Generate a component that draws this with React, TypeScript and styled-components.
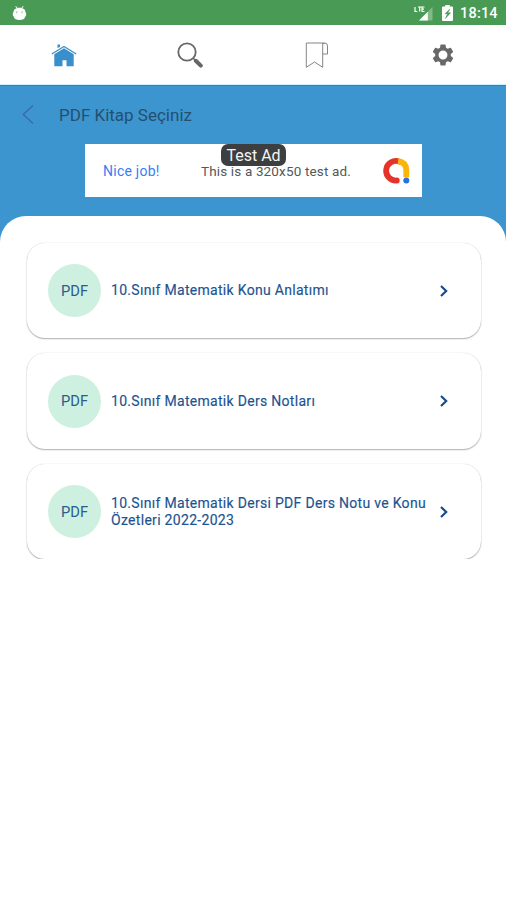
import React from "react";
import styled, { createGlobalStyle } from "styled-components";

const GlobalStyle = createGlobalStyle`
  * { box-sizing: border-box; }
  body { margin: 0; background: #fff; font-family: Roboto, "Liberation Sans", sans-serif; }
`;

const Screen = styled.div`
  width: 506px;
  height: 900px;
  display: flex;
  flex-direction: column;
  overflow: hidden;
  background: #3d95d0;
`;

const StatusBar = styled.header`
  height: 25px;
  flex: none;
  display: flex;
  align-items: center;
  justify-content: space-between;
  padding: 0 8px 0 12px;
  background: #489a54;
  color: #fff;
`;

const StatusGroup = styled.div`
  display: flex;
  align-items: center;
`;

const SignalIcon = styled.svg`
  margin-right: 9px;
`;

const BatteryIcon = styled.svg`
  margin-right: 7px;
`;

const Clock = styled.span`
  width: 38px;
  padding-top: 2px;
  font-size: 14.5px;
  font-weight: 500;
  line-height: 17px;
  letter-spacing: 0.2px;
  white-space: nowrap;
`;

const NavBar = styled.nav`
  height: 60px;
  flex: none;
  display: grid;
  grid-template-columns: repeat(4, 1fr);
  background: #fff;
  border-bottom: 1px solid #c9f1fb;
`;

const NavItem = styled.a`
  display: flex;
  align-items: center;
  justify-content: center;
  padding-left: 1px;
`;

const TitleRow = styled.div`
  height: 58px;
  flex: none;
  display: flex;
  align-items: center;
  padding-left: 22px;
  border-top: 1px solid #2588c6;
`;

const Title = styled.h1`
  margin: 0 0 0 25px;
  font-size: 17px;
  font-weight: 400;
  line-height: 20px;
  color: #24506f;
`;

const AdBanner = styled.aside`
  position: relative;
  width: 337px;
  height: 53px;
  flex: none;
  display: flex;
  align-items: center;
  margin: 1px 0 0 85px;
  padding: 0 11px 0 18px;
  background: #fff;
`;

const AdHeadline = styled.span`
  width: 98px;
  font-size: 14px;
  letter-spacing: 0.25px;
  color: #3c7cf4;
`;

const AdBody = styled.span`
  flex: 1;
  font-size: 13.5px;
  letter-spacing: 0.15px;
  color: #55585b;
  white-space: nowrap;
`;

const AdLabel = styled.span`
  position: absolute;
  top: 0;
  left: 136px;
  width: 65px;
  height: 22px;
  border-radius: 7px;
  background: #3d3e40;
  color: #f4f4f4;
  font-size: 16px;
  line-height: 23px;
  text-align: center;
  white-space: nowrap;
`;

const Sheet = styled.main`
  flex: 1;
  margin-top: 19px;
  padding: 25px 22px 0 25px;
  border-radius: 26px 26px 0 0;
  background: #fff;
`;

const CardList = styled.div`
  height: 318px;
  display: flex;
  flex-direction: column;
  gap: 15px;
  overflow: hidden;
  padding: 1.5px 0 0 1.5px;
`;

const Card = styled.article`
  width: 454px;
  height: 95.5px;
  flex: none;
  display: flex;
  align-items: center;
  padding: 0.5px 30.5px 0 21.5px;
  border-radius: 18px;
  background: #fff;
  box-shadow: 0 0 1px rgba(0, 0, 0, 0.22), 0 1px 1.5px rgba(0, 0, 0, 0.3);
`;

const Badge = styled.div`
  width: 53px;
  height: 53px;
  flex: none;
  display: grid;
  place-items: center;
  border-radius: 50%;
  background: #cdf0e0;
  color: #2b5c8d;
  font-size: 14.7px;
`;

const CardTitle = styled.h2`
  flex: 1;
  margin: 0 0 0 10px;
  font-size: 14px;
  font-weight: 400;
  line-height: 17px;
  letter-spacing: 0.3px;
  color: #1c5390;
  -webkit-text-stroke: 0.15px #1c5390;
  white-space: pre;
`;

const ChevronIcon = styled.svg`
  flex: none;
`;

const documents = [
  "10.Sınıf Matematik Konu Anlatımı",
  "10.Sınıf Matematik Ders Notları",
  "10.Sınıf Matematik Dersi PDF Ders Notu ve Konu\nÖzetleri 2022-2023",
];

export default function App() {
  return (
    <Screen>
      <GlobalStyle />
      <StatusBar>
        <svg width="15" height="16" viewBox="0 0 15 16">
          <path d="M3.7 1.2l1.7 2.2M11.3 1.2L9.6 3.4" stroke="#fff" strokeWidth="1" />
          <path d="M1.5 7.2C1.5 4.4 4 2.7 7.5 2.7s6 1.7 6 4.5c1 .4 1 4-.2 4.3C12.700 14.200 10.500 15 7.500 15s-5.200-.8-5.800-3.500C.5 11.200.5 7.600 1.500 7.200z" fill="#fff" />
          <path d="M4.800 6.300v2M10.100 6.300v2" stroke="#8cbf93" strokeWidth="1" />
        </svg>
        <StatusGroup>
          <SignalIcon width="19" height="16" viewBox="0 0 19 16">
            <path d="M1 2v4.500h2.300M4 2h3.500M5.700 2v4.500M10.500 2H8v4.500h2.500M8 4.200h2" fill="none" stroke="#fff" strokeWidth="1.200" />
            <path d="M18.500 2v13.500H5z" fill="#82b988" />
            <path d="M13.800 6.700v8.800H5z" fill="#fff" />
          </SignalIcon>
          <BatteryIcon width="11" height="16" viewBox="0 0 11 16">
            <path d="M3.300 0h4.400v1.500H10q1 0 1 1V15q0 1-1 1H1q-1 0-1-1V2.500q0-1 1-1h2.300z" fill="#fff" />
            <path d="M7.800 4L3 8.800h2.500l-2 4.700L8.500 7.800H5.800z" fill="#489a54" stroke="#489a54" strokeWidth=".5" />
          </BatteryIcon>
          <Clock>18:14</Clock>
        </StatusGroup>
      </StatusBar>
      <NavBar>
        <NavItem>
          <svg width="26" height="26" viewBox="0 0 26 26">
            <path d="M6.500 6V2.600H9V5" fill="#398fcc" />
            <path d="M.800 12L13 4.400 25.200 12" fill="none" stroke="#398fcc" strokeWidth="1.300" />
            <path d="M3.300 12.300L13 6.300l9.700 6v12h-7.200v-6h-4v6H3.300z" fill="#398fcc" />
          </svg>
        </NavItem>
        <NavItem>
          <svg width="26" height="26" viewBox="0 0 26 26">
            <circle cx="10" cy="10" r="8.700" fill="none" stroke="#686868" strokeWidth="1.800" />
            <path d="M16 16l3 3" stroke="#686868" strokeWidth="1.500" />
            <path d="M18.800 18.800l5 4.800" stroke="#666" strokeWidth="4" strokeLinecap="round" />
          </svg>
        </NavItem>
        <NavItem>
          <svg width="26" height="28" viewBox="0.7 0 26 28">
            <path d="M3 2h18.500q2.700 0 2.700 3v8h-4.800M19.400 2v24.300L11.200 21 3 26.300V2M19.400 2.500h1.800" fill="none" stroke="#858585" strokeWidth="1" />
          </svg>
        </NavItem>
        <NavItem>
          <svg width="26" height="26" viewBox="0 0 24 24">
            <path fill="#686868" d="M19.140 12.940c.04-.3.060-.61.060-.94s-.020-.64-.070-.94l2.030-1.580a.49.49 0 0 0 .12-.61l-1.920-3.320a.49.49 0 0 0-.59-.22l-2.390.96a7 7 0 0 0-1.620-.94l-.36-2.540A.48.48 0 0 0 13.920 2.400h-3.840a.48.48 0 0 0-.48.410l-.36 2.540a7 7 0 0 0-1.620.94l-2.390-.96a.49.49 0 0 0-.59.22L2.720 8.870a.48.48 0 0 0 .12.61l2.030 1.580a6 6 0 0 0 0 1.880l-2.030 1.580a.49.49 0 0 0-.12.61l1.920 3.320c.12.220.37.290.59.220l2.390-.96c.5.380 1.030.7 1.620.94l.36 2.540c.05.240.24.410.48.410h3.840c.24 0 .44-.17.48-.41l.36-2.540a7 7 0 0 0 1.620-.94l2.390.96c.22.080.47 0 .59-.22l1.920-3.320a.48.48 0 0 0-.12-.61zM12 16.100a4.100 4.100 0 1 1 0-8.200 4.100 4.100 0 0 1 0 8.200z" />
          </svg>
        </NavItem>
      </NavBar>
      <TitleRow>
        <svg width="12" height="20" viewBox="0 0 12 20">
          <path d="M11 0.500L1.200 9.500 11 18.500" fill="none" stroke="#3f65ac" strokeWidth="1.300" />
        </svg>
        <Title>PDF Kitap Seçiniz</Title>
      </TitleRow>
      <AdBanner>
        <AdHeadline>Nice job!</AdHeadline>
        <AdBody>This is a 320x50 test ad.</AdBody>
        <svg width="28" height="28" viewBox="0 0 28 28">
          <path d="M16.500 4.600A9.800 9.800 0 1 0 13.800 23.500" fill="none" stroke="#e6332a" strokeWidth="5.800" strokeLinecap="round" />
          <path d="M15 4.200Q23.300 5.200 23.300 13.500V20.300" fill="none" stroke="#fbb40a" strokeWidth="5.800" />
          <circle cx="23.300" cy="23.500" r="3" fill="#2871df" />
        </svg>
        <AdLabel>Test Ad</AdLabel>
      </AdBanner>
      <Sheet>
        <CardList>
          {documents.map((title) => (
            <Card key={title}>
              <Badge>PDF</Badge>
              <CardTitle>{title}</CardTitle>
              <ChevronIcon width="12" height="14" viewBox="0 0 12 14">
                <path d="M3 2l5.200 5L3 12" fill="none" stroke="#174c8c" strokeWidth="2.200" />
              </ChevronIcon>
            </Card>
          ))}
        </CardList>
      </Sheet>
    </Screen>
  );
}
